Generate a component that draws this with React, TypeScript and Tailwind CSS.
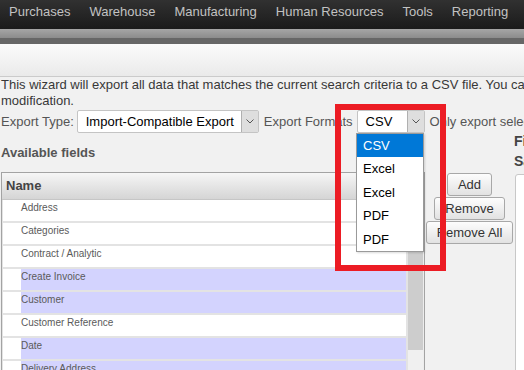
import React from 'react'

const menu = ['Purchases', 'Warehouse', 'Manufacturing', 'Human Resources', 'Tools', 'Reporting']

const fields: { name: string; selected?: boolean }[] = [
  { name: 'Address' },
  { name: 'Categories' },
  { name: 'Contract / Analytic' },
  { name: 'Create Invoice', selected: true },
  { name: 'Customer', selected: true },
  { name: 'Customer Reference' },
  { name: 'Date', selected: true },
  { name: 'Delivery Address', selected: true },
  { name: 'Delivery Method' },
]

const formats = ['CSV', 'Excel', 'Excel', 'PDF', 'PDF']

function Chevron() {
  return (
    <svg width="8" height="5" viewBox="0 0 8 5" fill="none">
      <polyline points="0.5,0.5 4,4 7.5,0.5" stroke="#555" strokeWidth="1" />
    </svg>
  )
}

function Select({ value, width }: { value: string; width: string }) {
  return (
    <div className={`${width} h-[23px] flex items-center bg-white border border-[#c4c4c4] rounded-[2px] shrink-0`}>
      <span className="flex-1 pl-[8px] text-[13px] text-black whitespace-nowrap overflow-hidden">{value}</span>
      <span className="w-[17px] h-[21px] flex items-center justify-center bg-[#dedede] border-l border-[#b0b0b0]">
        <Chevron />
      </span>
    </div>
  )
}

function Button({ label }: { label: string }) {
  return (
    <button className="h-[23px] px-[10px] border border-[#a8a8a8] rounded-[3px] bg-gradient-to-b from-[#fdfdfd] to-[#e2e2e2] text-[13px] text-[#333] leading-none whitespace-nowrap">
      {label}
    </button>
  )
}

export default function App() {
  return (
    <div
      className="relative w-[524px] h-[370px] overflow-hidden bg-[#f1f1f1]"
      style={{ fontFamily: '"Liberation Sans", Arial, sans-serif' }}
    >
      {/* top menu */}
      <div className="h-[29px] flex items-start pt-[3px] pl-[9px] gap-[19px] bg-gradient-to-b from-[#313131] to-[#1b1b1b]">
        {menu.map(m => (
          <span key={m} className="text-[13px] leading-[18px] text-[#c2c2c2] whitespace-nowrap">{m}</span>
        ))}
      </div>
      <div className="h-[9px] bg-gradient-to-b from-[#a6a6a6] to-[#8c8c8c]" />
      <div className="h-[6px] bg-[#676767]" />
      <div className="h-[33px] border-b border-[#cbcbcb] bg-gradient-to-b from-[#fbfbfb] to-[#eaeaea]" />

      {/* body */}
      <div className="pl-[1px]">
        <div className="text-[13px] leading-[16px] text-[#383838] whitespace-nowrap">
          <div>This wizard will export all data that matches the current search criteria to a CSV file. You can export all data or only the fields that can be reimported after</div>
          <div>modification.</div>
        </div>

        <div className="mt-[1px] h-[23px] flex items-center text-[13px] text-[#555] whitespace-nowrap">
          <span>Export Type:</span>
          <span className="ml-[3px]"><Select value="Import-Compatible Export" width="w-[182px]" /></span>
          <span className="ml-[5px]">Export Formats</span>
          <span className="ml-[4px]"><Select value="CSV" width="w-[68px]" /></span>
          <span className="ml-[5px]">Only export selected records</span>
        </div>

        <div className="flex items-start">
          {/* available fields */}
          <div className="w-[424px] shrink-0">
            <div className="mt-[12px] text-[13px] leading-[16px] font-bold text-[#555]">Available fields</div>
            <div className="mt-[11px] h-[300px] border border-[#a3a3a3] bg-white">
              <div className="h-[27px] flex items-center pl-[4px] border-b border-[#c6c6c6] bg-gradient-to-b from-[#f6f6f6] to-[#d5d5d5]">
                <span className="text-[13px] font-bold text-[#444]">Name</span>
              </div>
              <div className="flex bg-[#e3e3e3] h-[272px]">
                <div className="w-[404px] pl-[1px] flex flex-col gap-[2px]">
                  {fields.map(f => (
                    <div key={f.name} className="h-[21px] flex bg-white shrink-0">
                      <div className="w-[18px] shrink-0" />
                      <div className={`flex-1 pt-[2px] text-[10px] leading-[12px] text-[#5a5a5a] ${f.selected ? 'bg-[#d3d3fe]' : 'bg-white'}`}>
                        {f.name}
                      </div>
                    </div>
                  ))}
                </div>
                <div className="ml-[2px] w-[15px] bg-[#f0f0f0]">
                  <div className="h-[150px] bg-[#cdcdcd]" />
                </div>
                <div className="w-[1px] bg-[#ededed]" />
              </div>
            </div>
          </div>

          {/* move buttons */}
          <div className="w-[89px] shrink-0 mt-[40px] flex flex-col items-center gap-[1px]">
            <Button label="Add" />
            <Button label="Remove" />
            <Button label="Remove All" />
          </div>

          {/* fields to export */}
          <div className="flex-1 whitespace-nowrap">
            <div className="text-[14px] leading-[17px] font-bold text-[#444]">Fields to export</div>
            <div className="mt-[3px] text-[14px] leading-[17px] font-bold text-[#444]">Save fields list</div>
            <div className="mt-[4px] ml-[1px] h-[220px] w-[200px] border border-[#c8c8c8] rounded-tl-[3px] bg-white" />
          </div>
        </div>
      </div>

      {/* open format dropdown */}
      <div className="absolute left-[356px] top-[133px] w-[68px] border border-[#9a9a9a] bg-white shadow-[1px_1px_2px_rgba(0,0,0,0.15)]">
        {formats.map((f, i) => (
          <div
            key={i}
            className={`h-[23.4px] flex items-center pl-[6px] text-[13px] ${i === 0 ? 'bg-[#0078d7] text-white' : 'text-black'}`}
          >
            {f}
          </div>
        ))}
      </div>

      {/* annotation */}
      <div className="absolute left-[335px] top-[104px] w-[111px] h-[167px] border-[6px] border-[#ec1c24]" />
    </div>
  )
}
